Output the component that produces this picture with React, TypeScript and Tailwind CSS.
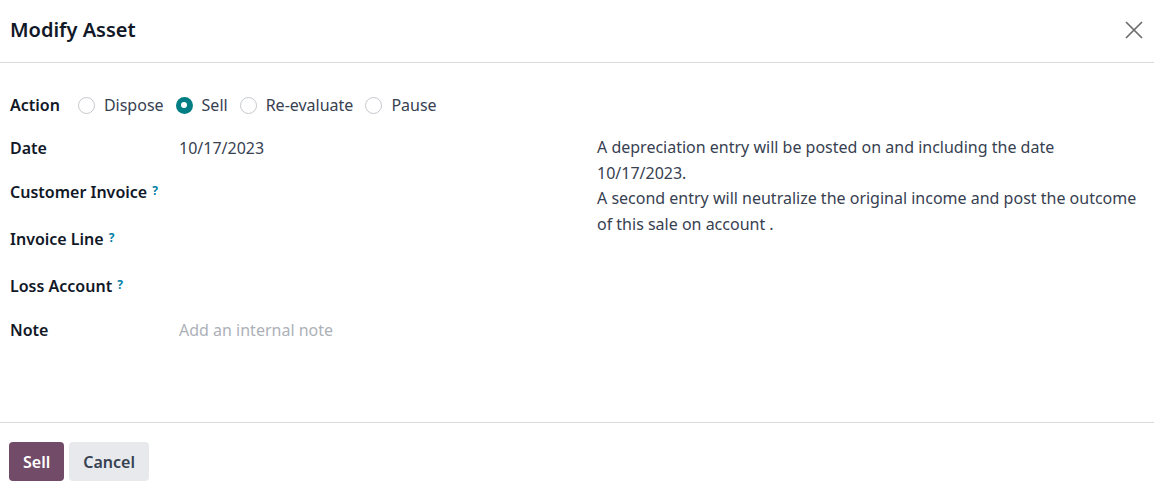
import { useState } from 'react';

const font = { fontFamily: '"Noto Sans", "Open Sans", sans-serif' };

function Radio({ label, checked, onClick }: { label: string; checked: boolean; onClick: () => void }) {
  return (
    <label className="flex items-center gap-[9px] cursor-pointer" onClick={onClick}>
      {checked ? (
        <span className="flex h-[17px] w-[17px] items-center justify-center rounded-full bg-[#017e84]">
          <span className="h-[6px] w-[6px] rounded-full bg-white" />
        </span>
      ) : (
        <span className="h-[17px] w-[17px] rounded-full border border-[#c4c7cc] bg-white" />
      )}
      <span className="text-[#374151]">{label}</span>
    </label>
  );
}

function Help() {
  return <sup className="ml-[5px] text-[12px] font-bold text-[#0180a5] relative -top-[3px]">?</sup>;
}

export default function App() {
  const [action, setAction] = useState('Sell');
  const actions = ['Dispose', 'Sell', 'Re-evaluate', 'Pause'];

  return (
    <div className="flex h-[492px] w-full flex-col bg-white text-[16px] text-[#111827]" style={font}>
      {/* Header */}
      <div className="flex h-[63px] items-center justify-between border-b border-[#d8dadd] pb-[3px] pl-[10px] pr-[10px]">
        <h4 className="text-[20px] font-semibold text-[#111827]">Modify Asset</h4>
        <button type="button" className="text-[#6b6b6b]">
          <svg width="20" height="20" viewBox="0 0 20 20" fill="none" stroke="currentColor" strokeWidth="1.7">
            <path d="M2 2 L18 18 M18 2 L2 18" />
          </svg>
        </button>
      </div>

      {/* Body */}
      <div className="flex-1 px-[10px] pt-[30px]">
        <div className="flex h-[24px] items-center gap-[18px]">
          <span className="font-semibold">Action</span>
          <div className="flex items-center gap-[12px]">
            {actions.map((a) => (
              <Radio key={a} label={a} checked={action === a} onClick={() => setAction(a)} />
            ))}
          </div>
        </div>

        <div className="mt-[19px] grid grid-cols-[587px_1fr]">
          <div className="flex flex-col">
            <div className="grid h-[44px] grid-cols-[169px_1fr]">
              <span className="font-semibold">Date</span>
              <span className="text-[#374151]">10/17/2023</span>
            </div>
            <div className="h-[47px]">
              <span className="font-semibold">Customer Invoice</span>
              <Help />
            </div>
            <div className="h-[47px]">
              <span className="font-semibold">Invoice Line</span>
              <Help />
            </div>
            <div className="h-[44px]">
              <span className="font-semibold">Loss Account</span>
              <Help />
            </div>
            <div className="grid grid-cols-[169px_1fr]">
              <span className="font-semibold">Note</span>
              <span className="text-[#adb1b8]">Add an internal note</span>
            </div>
          </div>
          <div className="-mt-[1px] leading-[25.5px] text-[#374151]">
            <p>A depreciation entry will be posted on and including the date 10/17/2023.</p>
            <p>A second entry will neutralize the original income and post the outcome of this sale on account .</p>
          </div>
        </div>
      </div>

      {/* Footer */}
      <div className="flex h-[70px] items-start gap-[5px] border-t border-[#d8dadd] px-[9px] pt-[19px]">
        <button type="button" className="h-[39px] rounded-[4px] bg-[#714b67] px-[14px] font-semibold text-white">
          Sell
        </button>
        <button type="button" className="h-[39px] rounded-[4px] bg-[#e7e9ed] px-[14px] font-semibold text-[#374151]">
          Cancel
        </button>
      </div>
    </div>
  );
}
